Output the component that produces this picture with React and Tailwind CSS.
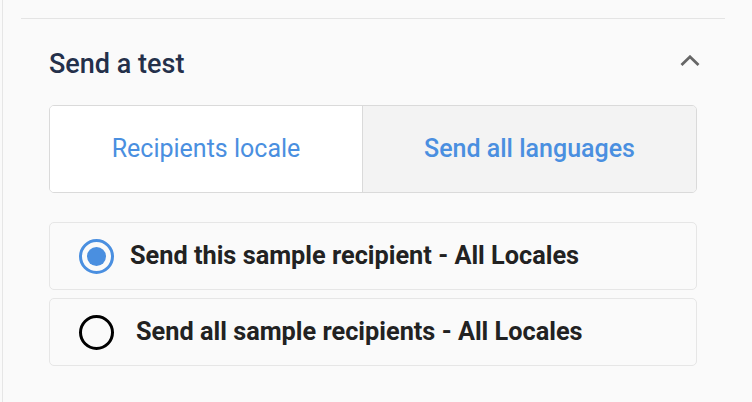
export default function App() {
  return (
    <div className="w-[752px] h-[402px] bg-[#fafafa] font-['Roboto',sans-serif] overflow-hidden">
      <div className="ml-[2px] h-full border-l border-[#e6e6e6]">
        {/* top divider */}
        <div className="pt-[18px]">
          <div className="ml-[18px] w-[704px] h-px bg-[#e4e4e4]" />
        </div>

        <div className="ml-[46px] w-[648px]">
          {/* header */}
          <div className="mt-[29px] flex justify-between items-start">
            <h2 className="text-[27px] leading-[32px] font-medium text-[#24304a]">
              Send a test
            </h2>
            <svg
              className="mt-[7px] mr-[-3px]"
              width="20"
              height="11"
              viewBox="0 0 20 11"
              fill="none"
              stroke="#666"
              strokeWidth="2.8"
            >
              <polyline points="1.5,10 10,1.8 18.5,10" />
            </svg>
          </div>

          {/* tabs */}
          <div className="mt-[25px] h-[88px] flex rounded-[5px] border border-[#dadada] overflow-hidden">
            <button className="w-[312px] bg-white text-[25px] text-[#4a8fe0] font-normal">
              Recipients locale
            </button>
            <button className="flex-1 bg-[#f3f3f3] border-l border-[#dadada] text-[25px] text-[#4a8fe0] font-medium">
              Send all languages
            </button>
          </div>

          {/* options */}
          <div className="mt-[29px] flex flex-col gap-2">
            <label className="h-[68px] flex items-center pl-[29px] rounded-[5px] border border-[#e6e6e6]">
              <span className="w-[35px] h-[35px] rounded-full border-[3px] border-[#4a8fe0] flex items-center justify-center">
                <span className="w-[19px] h-[19px] rounded-full bg-[#4a8fe0]" />
              </span>
              <span className="ml-4 text-[25.3px] font-bold text-[#222]">
                Send this sample recipient - All Locales
              </span>
            </label>
            <label className="h-[68px] flex items-center pl-[29px] rounded-[5px] border border-[#e6e6e6]">
              <span className="w-[35px] h-[35px] rounded-full border-[3px] border-black" />
              <span className="ml-[22px] text-[25.3px] font-bold text-[#222]">
                Send all sample recipients - All Locales
              </span>
            </label>
          </div>
        </div>
      </div>
    </div>
  );
}
